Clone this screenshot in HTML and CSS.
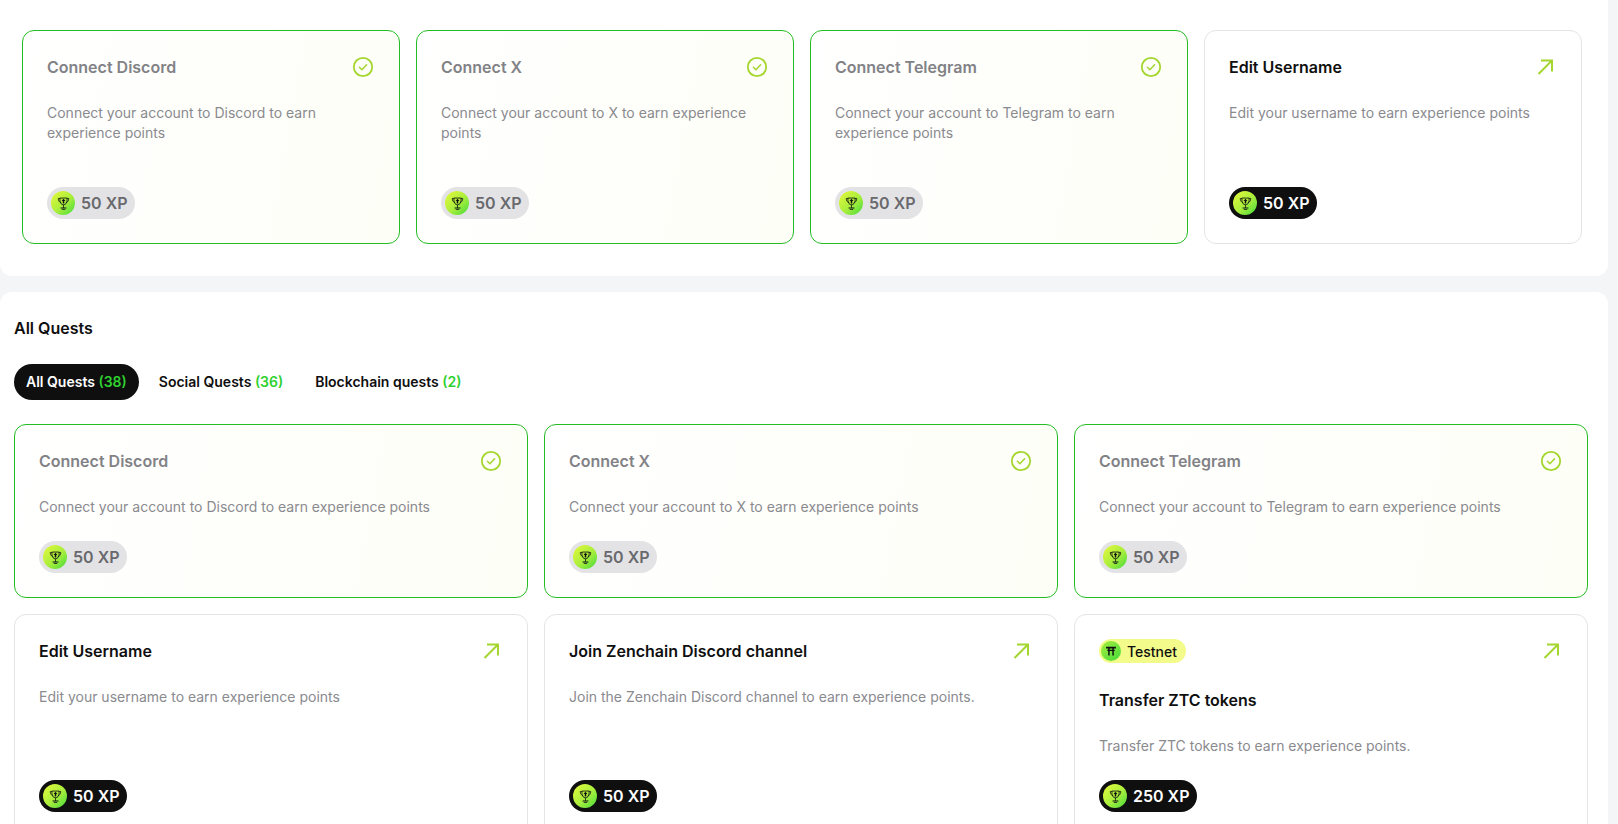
FILE: index.html
```html
<!DOCTYPE html>
<html lang="en">
  <head>
    <meta charset="UTF-8" />
    <meta name="viewport" content="width=device-width, initial-scale=1.0" />
    <title>Quests</title>
    <link rel="stylesheet" href="styles.css">
  </head>
  <body>
    <svg class="icon-defs" aria-hidden="true">
      <symbol id="trophy" viewBox="0 0 16 16">
        <path d="M4.200 2.600H2.400c0 2.400 1.300 4.200 3.200 4.600M11.800 2.600h1.800c0 2.400-1.300 4.200-3.200 4.600" fill="none" stroke="currentColor" stroke-width="0.800" />
        <path d="M4.200 2.200h7.600v2.600c0 2.700-1.700 4.600-3.800 4.600S4.200 7.500 4.200 4.800z" fill="none" stroke="currentColor" stroke-width="0.900" />
        <path d="M8 2.800l2.100 2.400H8.800v2.900H7.200V5.200H5.900z" fill="currentColor" />
        <path d="M7.600 9.400h0.800v3.200h-0.800zM4.900 12.300h6.200v0.900H4.900zM6.200 14.100h3.600v0.800H6.200z" fill="currentColor" />
      </symbol>
      <symbol id="torii" viewBox="0 0 16 16">
        <path d="M2.400 3h11.200v2H2.400zM3.800 6.600h8.400v1.500H3.800z" fill="currentColor" />
        <path d="M4.800 4.500h1.700v8.500H4.800zM9.500 4.500h1.700v8.500H9.500z" fill="currentColor" />
      </symbol>
      <symbol id="check" viewBox="0 0 24 24">
        <circle cx="12" cy="12" r="9.200" fill="none" stroke="currentColor" stroke-width="1.800" />
        <path d="M8.400 12.300l2.500 2.400 4.700-5" fill="none" stroke="currentColor" stroke-width="1.500" stroke-linecap="round" stroke-linejoin="round" />
      </symbol>
      <symbol id="arrow" viewBox="0 0 24 24">
        <path d="M5.500 19L19 5.500M8 5.500h11V16.500" fill="none" stroke="currentColor" stroke-width="2" />
      </symbol>
    </svg>

    <div class="page">
      <section class="panel panel-top">
        <div class="quest-grid quest-grid-four">
          <article class="quest-card done">
            <div class="quest-head">
              <h3>Connect Discord</h3>
              <svg class="state-icon"><use href="#check" /></svg>
            </div>
            <p>Connect your account to Discord to earn experience points</p>
            <div class="xp"><span class="coin"><svg><use href="#trophy" /></svg></span>50 XP</div>
          </article>
          <article class="quest-card done">
            <div class="quest-head">
              <h3>Connect X</h3>
              <svg class="state-icon"><use href="#check" /></svg>
            </div>
            <p>Connect your account to X to earn experience points</p>
            <div class="xp"><span class="coin"><svg><use href="#trophy" /></svg></span>50 XP</div>
          </article>
          <article class="quest-card done">
            <div class="quest-head">
              <h3>Connect Telegram</h3>
              <svg class="state-icon"><use href="#check" /></svg>
            </div>
            <p>Connect your account to Telegram to earn experience points</p>
            <div class="xp"><span class="coin"><svg><use href="#trophy" /></svg></span>50 XP</div>
          </article>
          <article class="quest-card">
            <div class="quest-head">
              <h3>Edit Username</h3>
              <svg class="state-icon"><use href="#arrow" /></svg>
            </div>
            <p>Edit your username to earn experience points</p>
            <div class="xp"><span class="coin"><svg><use href="#trophy" /></svg></span>50 XP</div>
          </article>
        </div>
      </section>

      <section class="panel panel-all">
        <h2>All Quests</h2>
        <div class="tabs">
          <button class="tab active">All Quests <span>(38)</span></button>
          <button class="tab">Social Quests <span>(36)</span></button>
          <button class="tab">Blockchain quests <span>(2)</span></button>
        </div>
        <div class="quest-grid quest-grid-three">
          <article class="quest-card done">
            <div class="quest-head">
              <h3>Connect Discord</h3>
              <svg class="state-icon"><use href="#check" /></svg>
            </div>
            <p>Connect your account to Discord to earn experience points</p>
            <div class="xp"><span class="coin"><svg><use href="#trophy" /></svg></span>50 XP</div>
          </article>
          <article class="quest-card done">
            <div class="quest-head">
              <h3>Connect X</h3>
              <svg class="state-icon"><use href="#check" /></svg>
            </div>
            <p>Connect your account to X to earn experience points</p>
            <div class="xp"><span class="coin"><svg><use href="#trophy" /></svg></span>50 XP</div>
          </article>
          <article class="quest-card done">
            <div class="quest-head">
              <h3>Connect Telegram</h3>
              <svg class="state-icon"><use href="#check" /></svg>
            </div>
            <p>Connect your account to Telegram to earn experience points</p>
            <div class="xp"><span class="coin"><svg><use href="#trophy" /></svg></span>50 XP</div>
          </article>
          <article class="quest-card">
            <div class="quest-head">
              <h3>Edit Username</h3>
              <svg class="state-icon"><use href="#arrow" /></svg>
            </div>
            <p>Edit your username to earn experience points</p>
            <div class="xp"><span class="coin"><svg><use href="#trophy" /></svg></span>50 XP</div>
          </article>
          <article class="quest-card">
            <div class="quest-head">
              <h3>Join Zenchain Discord channel</h3>
              <svg class="state-icon"><use href="#arrow" /></svg>
            </div>
            <p>Join the Zenchain Discord channel to earn experience points.</p>
            <div class="xp"><span class="coin"><svg><use href="#trophy" /></svg></span>50 XP</div>
          </article>
          <article class="quest-card">
            <div class="quest-head quest-head-network">
              <div class="network"><span class="coin coin-small"><svg><use href="#torii" /></svg></span>Testnet</div>
              <svg class="state-icon"><use href="#arrow" /></svg>
            </div>
            <h3>Transfer ZTC tokens</h3>
            <p>Transfer ZTC tokens to earn experience points.</p>
            <div class="xp"><span class="coin"><svg><use href="#trophy" /></svg></span>250 XP</div>
          </article>
        </div>
      </section>
    </div>
  </body>
</html>
```

FILE: styles.css
```css
* {
  margin: 0;
  padding: 0;
  box-sizing: border-box;
}

html,
body {
  height: 100%;
  overflow: hidden;
}

body {
  background-color: #f4f5f7;
  font-family: Inter, "Liberation Sans", sans-serif;
  font-size: 14px;
  color: #0f0f10;
}

.icon-defs {
  display: none;
}

.page {
  display: flex;
  flex-direction: column;
  gap: 16px;
  width: 1608px;
}

.panel {
  background-color: white;
}

.panel-top {
  padding: 30px 26px 32px 22px;
  border-radius: 0 0 12px 12px;
}

.panel-all {
  padding: 24px 20px 24px 14px;
  border-radius: 12px 12px 0 0;
}

h2 {
  margin-bottom: 24px;
  font-size: 16px;
  font-weight: 600;
  line-height: 24px;
}

.tabs {
  display: flex;
  gap: 8px;
  margin-bottom: 24px;
}

.tab {
  height: 36px;
  padding: 0 12px 2px;
  border: 0;
  border-radius: 18px;
  background: none;
  font-family: inherit;
  font-size: 14px;
  font-weight: 600;
  color: #0f0f10;
}

.tab span {
  color: #2fd12f;
}

.tab.active {
  background-color: #0f0f10;
  color: white;
}

.quest-grid {
  display: grid;
  gap: 16px;
}

.quest-grid-four {
  grid-template-columns: repeat(4, 1fr);
}

.quest-grid-four .quest-card {
  min-height: 214px;
}

.quest-grid-three {
  grid-template-columns: repeat(3, 1fr);
}

.quest-card {
  display: flex;
  flex-direction: column;
  gap: 24px;
  padding: 24px;
  border: 1px solid #e4e4e7;
  border-radius: 12px;
  background-color: white;
}

.quest-card.done {
  border-color: #24bd24;
  background: linear-gradient(100deg, #ffffff 0%, #fdfef6 100%);
}

.quest-head {
  display: flex;
  justify-content: space-between;
  align-items: center;
  height: 24px;
}

.quest-head-network {
  margin-bottom: 1px;
}

h3 {
  font-size: 16px;
  font-weight: 600;
  line-height: 24px;
}

.quest-card p {
  font-size: 14px;
  line-height: 20px;
  color: #8a8a8f;
}

.done h3 {
  color: #828286;
}

.state-icon {
  width: 24px;
  height: 24px;
  color: #a4d62f;
}

.xp {
  display: flex;
  align-items: center;
  gap: 6px;
  align-self: flex-start;
  height: 32px;
  margin-top: auto;
  padding: 0 8px 0 4px;
  border-radius: 16px;
  background-color: #0f0f10;
  font-size: 16px;
  font-weight: 600;
  color: white;
}

.done .xp {
  background-color: #e3e3e6;
  color: #69696d;
}

.coin {
  display: flex;
  align-items: center;
  justify-content: center;
  width: 24px;
  height: 24px;
  border-radius: 50%;
  background: linear-gradient(135deg, #d6f53c 15%, #a8ee3c 55%, #42da3c 100%);
  color: #0f0f10;
}

.coin svg {
  width: 15px;
  height: 15px;
}

.network {
  display: flex;
  align-items: center;
  gap: 6px;
  height: 24px;
  padding: 0 9px 0 2px;
  border-radius: 12px;
  background-color: #f3fb8a;
  font-size: 14px;
  font-weight: 500;
}

.coin-small {
  width: 20px;
  height: 20px;
  background: linear-gradient(135deg, #a8ee3c 0%, #42da3c 100%);
}

.coin-small svg {
  width: 14px;
  height: 14px;
}
```
